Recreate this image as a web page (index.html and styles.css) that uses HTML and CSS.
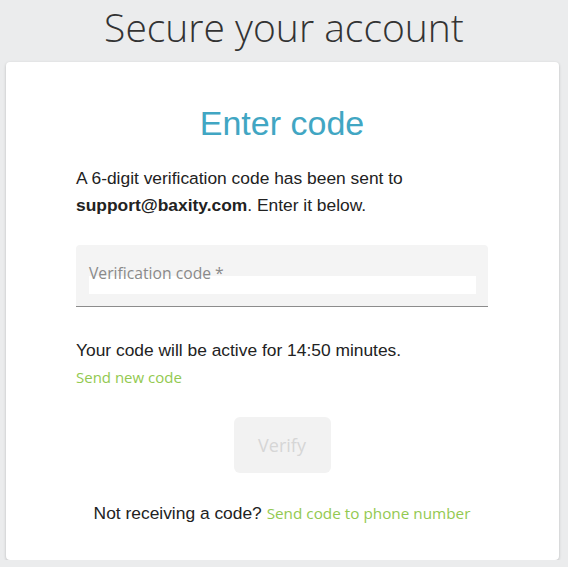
FILE: index.html
```html
<!DOCTYPE html>
<html lang="en">
<head>
<meta charset="utf-8">
<title>Secure your account</title>
<link rel="stylesheet" href="styles.css">
</head>
<body>
  <h1 class="page-title">Secure your account</h1>
  <main class="card">
    <h2 class="card-title">Enter code</h2>
    <p class="intro">A 6-digit verification code has been sent to <strong>support@baxity.com</strong>. Enter it below.</p>
    <div class="field">
      <label class="field-label" for="code">Verification code *</label>
      <input class="field-input" id="code" type="text">
    </div>
    <p class="timer">Your code will be active for 14:50 minutes.</p>
    <a class="link resend" href="#">Send new code</a>
    <div class="actions">
      <button class="verify" type="button" disabled>Verify</button>
    </div>
    <p class="alt">Not receiving a code? <a class="link" href="#">Send code to phone number</a></p>
  </main>
</body>
</html>
```
FILE: styles.css
```css
html, body {
  margin: 0;
  padding: 0;
}
body {
  background: #ebeced;
  font-family: "Liberation Sans", Arial, sans-serif;
  color: #222;
}
.page-title {
  margin: 0 0 8px;
  font-family: "Open Sans", sans-serif;
  font-weight: 300;
  font-size: 39px;
  line-height: 54px;
  color: #333;
  text-align: center;
}
.card {
  display: flex;
  flex-direction: column;
  margin: 0 9px 0 6px;
  padding: 43px 71px 37px 70px;
  background: #fff;
  border-radius: 4px;
  box-shadow: 0 1px 3px rgba(0, 0, 0, 0.22);
}
.card-title {
  margin: 0;
  font-family: "Liberation Sans", Arial, sans-serif;
  font-weight: 400;
  font-size: 34px;
  line-height: 37px;
  color: #41a6c3;
  text-align: center;
}
.intro {
  margin: 23px 0 0;
  font-size: 17.4px;
  line-height: 27px;
}
.intro strong {
  font-weight: 700;
}
.field {
  position: relative;
  display: flex;
  flex-direction: column;
  margin-top: 26px;
  padding: 31px 12px 0 13px;
  height: 30px;
  background: #f4f4f4;
  border-radius: 4px 4px 0 0;
  border-bottom: 1px solid #8c8c8c;
}
.field-input {
  height: 18px;
  margin: 0;
  padding: 0;
  border: 0;
  background: #fff;
  outline: none;
}
.field-label {
  position: absolute;
  left: 13px;
  top: 17px;
  font-family: "Open Sans", sans-serif;
  font-size: 15.7px;
  line-height: 22px;
  color: #8a8a8a;
}
.timer {
  margin: 33px 0 0;
  font-size: 17.4px;
  line-height: 20px;
}
.link {
  font-family: "Open Sans", sans-serif;
  color: #93c950;
  text-decoration: none;
}
.resend {
  margin-top: 7px;
  font-size: 15px;
  line-height: 20px;
  align-self: flex-start;
}
.actions {
  display: flex;
  justify-content: center;
  margin-top: 30px;
}
.verify {
  width: 97px;
  height: 56px;
  border: 0;
  border-radius: 6px;
  background: #f2f2f2;
  color: #d6d6d6;
  font-family: "Open Sans", sans-serif;
  font-size: 18px;
  font-weight: 400;
}
.alt {
  margin: 30px 0 0;
  font-size: 17.4px;
  line-height: 20px;
  text-align: center;
}
.alt .link {
  font-size: 15.3px;
}
```
